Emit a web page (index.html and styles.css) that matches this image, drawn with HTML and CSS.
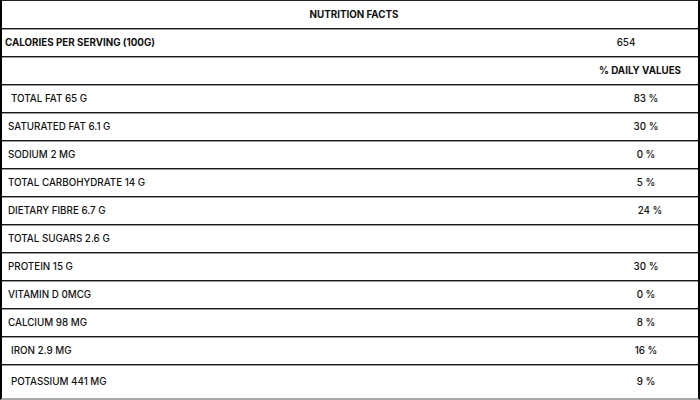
FILE: index.html
```html
<!DOCTYPE html>
<html>
<head>
<meta charset="utf-8">
<link rel="stylesheet" href="styles.css">
</head>
<body>
<div class="facts">
  <div class="row title"><div class="full">NUTRITION FACTS</div></div>
  <div class="row"><div class="label bold lp5">CALORIES PER SERVING (100G)</div><div class="val cal">654</div></div>
  <div class="row"><div class="label"></div><div class="val bold dv">% DAILY VALUES</div></div>
  <div class="row"><div class="label lp11">TOTAL FAT 65 G</div><div class="val">83 %</div></div>
  <div class="row"><div class="label">SATURATED FAT 6.1 G</div><div class="val">30 %</div></div>
  <div class="row"><div class="label">SODIUM 2 MG</div><div class="val">0 %</div></div>
  <div class="row"><div class="label">TOTAL CARBOHYDRATE 14 G</div><div class="val">5 %</div></div>
  <div class="row"><div class="label">DIETARY FIBRE 6.7 G</div><div class="val shift">24 %</div></div>
  <div class="row"><div class="label">TOTAL SUGARS 2.6 G</div><div class="val"></div></div>
  <div class="row"><div class="label">PROTEIN 15 G</div><div class="val">30 %</div></div>
  <div class="row"><div class="label">VITAMIN D 0MCG</div><div class="val">0 %</div></div>
  <div class="row"><div class="label">CALCIUM 98 MG</div><div class="val">8 %</div></div>
  <div class="row"><div class="label lp11">IRON 2.9 MG</div><div class="val">16 %</div></div>
  <div class="row last"><div class="label lp11">POTASSIUM 441 MG</div><div class="val">9 %</div></div>
</div>
</body>
</html>
```
FILE: styles.css
```css
html, body {
  margin: 0;
  padding: 0;
  background: #fff;
}
body {
  font-family: "Inter", "Open Sans", sans-serif;
  font-size: 9.8px;
  font-weight: 500;
  color: #111;
}
.facts {
  width: 700px;
  height: 400px;
  box-sizing: border-box;
  border-left: 2px solid #000;
  border-right: 2px solid #000;
  border-top: 1px solid #222;
  border-bottom: 2px solid #aaa;
  display: flex;
  flex-direction: column;
}
.row {
  display: grid;
  grid-template-columns: 254px 1fr;
  height: 28px;
  box-sizing: border-box;
  border-bottom: 1px solid #1a1a1a;
  box-shadow: 0 1px 0 #999;
  align-items: center;
}
.row.title { height: 28px; grid-template-columns: 1fr; }
.row.last { flex: 1; border-bottom: none; box-shadow: none; }
.full {
  text-align: center;
  font-weight: 700;
  padding-left: 8px;
}
.label {
  padding-left: 6px;
  height: 100%;
  display: flex;
  align-items: center;
}
.lp5 { padding-left: 3px; }
.lp11 { padding-left: 9px; }
.bold { font-weight: 700; }
.val {
  height: 100%;
  display: flex;
  align-items: center;
  justify-content: center;
  padding-left: 338px;
  box-sizing: border-box;
}
.val.cal { padding-left: 298px; }
.val.dv { padding-left: 326px; }
.val.shift { padding-left: 346px; }
```
